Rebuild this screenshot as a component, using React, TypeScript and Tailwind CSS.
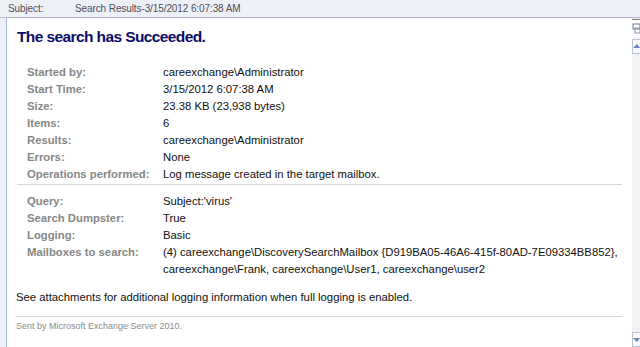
import React from "react";

const first = [
  ["Started by:", "careexchange\\Administrator"],
  ["Start Time:", "3/15/2012 6:07:38 AM"],
  ["Size:", "23.38 KB (23,938 bytes)"],
  ["Items:", "6"],
  ["Results:", "careexchange\\Administrator"],
  ["Errors:", "None"],
  ["Operations performed:", "Log message created in the target mailbox."],
];

const second: [string, React.ReactNode][] = [
  ["Query:", "Subject:'virus'"],
  ["Search Dumpster:", "True"],
  ["Logging:", "Basic"],
  [
    "Mailboxes to search:",
    <>
      (4) careexchange\DiscoverySearchMailbox{" "}
      <span className="whitespace-nowrap">{"{D919BA05-46A6-415f-80AD-7E09334BB852},"}</span>{" "}
      careexchange\Frank, careexchange\User1, careexchange\user2
    </>,
  ],
];

function Rows({ rows }: { rows: [string, React.ReactNode][] }) {
  return (
    <div className="grid grid-cols-[136px_1fr] pl-[20px] pr-[4px]">
      {rows.map(([k, v]) => (
        <React.Fragment key={k}>
          <div className="font-bold text-[#878787] leading-[17px] whitespace-nowrap">{k}</div>
          <div className="text-[#111] leading-[17px]">{v}</div>
        </React.Fragment>
      ))}
    </div>
  );
}

export default function App() {
  return (
    <div className="w-[640px] h-[347px] overflow-hidden flex flex-col bg-[#eef0f8] font-['Liberation_Sans',sans-serif] text-[11.3px]">
      <div className="h-[18px] shrink-0 flex items-center border-b border-[#b4b8c8] text-[10px] tracking-[-0.1px] text-[#4e4e58]">
        <span className="pl-[8px] w-[75px]">Subject:</span>
        <span>Search Results-3/15/2012 6:07:38 AM</span>
      </div>
      <div className="flex-1 flex pl-[6px] min-h-0">
        <div className="flex-1 bg-white border-l border-[#a8bdd8] pt-[8px]">
          <h1 className="pl-[10px] text-[15.5px] leading-[21px] font-bold tracking-[-0.6px] text-[#0c0c66]">
            The search has Succeeded.
          </h1>
          <div className="mt-[17px]">
            <Rows rows={first} />
          </div>
          <div className="ml-[10px] mr-[10px] mt-[1px] border-t border-[#d6d6d6]" />
          <div className="mt-[8px]">
            <Rows rows={second} />
          </div>
          <p className="pl-[9px] mt-[11px] leading-[17px] text-[#111]">
            See attachments for additional logging information when full logging is enabled.
          </p>
          <div className="ml-[9px] mr-[10px] mt-[10px] border-t border-[#d6d6d6]" />
          <p className="pl-[9px] mt-[3px] text-[9px] leading-[12px] text-[#8c8c8c]">
            Sent by Microsoft Exchange Server 2010.
          </p>
        </div>
        <div className="w-[8px] shrink-0 flex flex-col bg-[#f3f3f3]">
          <div className="h-[18px] border-t border-[#777] mt-[1px] flex items-center bg-white">
            <svg width="8" height="14" viewBox="0 0 8 14">
              <rect x="1" y="2" width="7" height="5" fill="none" stroke="#6b7a95" />
              <rect x="3" y="6" width="5" height="5" fill="none" stroke="#8b94a8" />
            </svg>
          </div>
          <div className="h-[15px] mt-[2px] border border-[#b9c3d3] border-r-0 bg-[#f8f9fc] flex items-center justify-center">
            <svg width="7" height="5" viewBox="0 0 7 5">
              <path d="M0 4 L4 0 L7 4 Z" fill="#6c84b8" />
            </svg>
          </div>
          <div className="flex-1" />
          <div className="h-[15px] border border-[#b9c3d3] border-r-0 bg-[#f8f9fc] flex items-center justify-center">
            <svg width="7" height="5" viewBox="0 0 7 5">
              <path d="M0 1 L4 5 L7 1 Z" fill="#6c84b8" />
            </svg>
          </div>
        </div>
      </div>
    </div>
  );
}
